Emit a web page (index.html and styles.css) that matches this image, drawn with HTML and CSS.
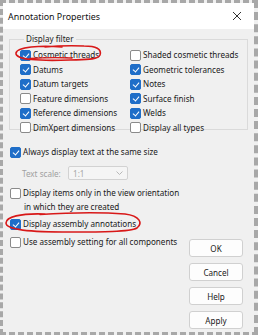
FILE: index.html
```html
<!DOCTYPE html>
<html>
<head>
<meta charset="utf-8">
<link rel="stylesheet" href="styles.css">
</head>
<body>
<div class="frame">
  <div class="dialog">
    <div class="titlebar">
      <span class="title">Annotation Properties</span>
      <svg class="close" width="10" height="10" viewBox="0 0 10 10"><path d="M1 1L9 9M9 1L1 9" stroke="#333" stroke-width="1"/></svg>
    </div>
    <div class="body">
      <fieldset class="group">
        <legend>Display filter</legend>
        <div class="grid">
          <label class="opt"><span class="cb on"></span>Cosmetic threads</label>
          <label class="opt"><span class="cb"></span>Shaded cosmetic threads</label>
          <label class="opt"><span class="cb on"></span>Datums</label>
          <label class="opt"><span class="cb on"></span>Geometric tolerances</label>
          <label class="opt"><span class="cb on"></span>Datum targets</label>
          <label class="opt"><span class="cb on"></span>Notes</label>
          <label class="opt"><span class="cb"></span>Feature dimensions</label>
          <label class="opt"><span class="cb on"></span>Surface finish</label>
          <label class="opt"><span class="cb on"></span>Reference dimensions</label>
          <label class="opt"><span class="cb on"></span>Welds</label>
          <label class="opt"><span class="cb"></span>DimXpert dimensions</label>
          <label class="opt"><span class="cb"></span>Display all types</label>
        </div>
      </fieldset>
      <div class="lower">
        <div class="opts">
          <label class="opt row1"><span class="cb on"></span>Always display text at the same size</label>
          <div class="scale">
            <span class="scale-label">Text scale:</span>
            <span class="select"><span>1:1</span><svg width="7" height="4" viewBox="0 0 7 4"><path d="M0.5 0.5L3.5 3.5L6.5 0.5" fill="none" stroke="#b8b8b8" stroke-width="1"/></svg></span>
          </div>
          <label class="opt row3"><span class="cb"></span>Display items only in the view orientation</label>
          <div class="cont">in which they are created</div>
          <label class="opt row4"><span class="cb on"></span>Display assembly annotations</label>
          <label class="opt row5"><span class="cb"></span>Use assembly setting for all components</label>
        </div>
        <div class="buttons">
          <button class="btn">OK</button>
          <button class="btn">Cancel</button>
          <button class="btn">Help</button>
          <button class="btn">Apply</button>
        </div>
      </div>
    </div>
  </div>
  <svg class="marks" width="258" height="335" viewBox="0 0 258 335">
    <path d="M62 47 C40 45, 17 47, 16 53 C15 60, 40 61, 70 60 C85 59.5, 98 60, 100 55 C102 49, 96 46, 84 46 C70 45.5, 55 46, 45 47" fill="none" stroke="#d81818" stroke-width="1.6" stroke-linecap="round"/>
    <path d="M30 58.5 C45 57.5, 60 57.5, 72 58" fill="none" stroke="#d81818" stroke-width="1.4" stroke-linecap="round"/>
    <path d="M45 214 C20 213, 6 217, 6 223 C6 230, 30 232, 70 232 C100 232, 130 232, 137 228 C143 223, 140 216, 125 214 C100 212, 70 212.5, 40 214.5" fill="none" stroke="#d81818" stroke-width="1.6" stroke-linecap="round"/>
  </svg>
</div>
</body>
</html>
```
FILE: styles.css
```css
* { box-sizing: border-box; }
html, body { margin: 0; padding: 0; }
body {
  width: 258px;
  height: 335px;
  overflow: hidden;
  background: #fff;
  font-family: "Noto Sans", "Open Sans", sans-serif;
  font-size: 8.1px;
  color: #1a1a1a;
}
.frame {
  position: relative;
  width: 258px;
  height: 335px;
  border-style: dashed;
  border-color: #a8a8a8;
  border-width: 3px 4px 3px 3px;
  background: #f0f0f0;
}
.dialog {
  width: 100%;
  height: 100%;
  display: flex;
  flex-direction: column;
}
.titlebar {
  height: 26px;
  background: #fff;
  display: flex;
  align-items: center;
  justify-content: space-between;
  padding: 0 12px 0 5px;
}
.title { font-size: 8.9px; color: #111; }
.close { display: block; }
.body {
  flex: 1;
  background: #f0f0f0;
  padding: 5px 6px 0 6px;
}
.group {
  margin: 0;
  border: 1px solid #dadada;
  padding: 4px 0 0 10px;
  height: 96px;
}
.group legend {
  padding: 0 2px;
  margin-left: 4px;
  color: #222;
  line-height: 10px;
}
.grid {
  display: grid;
  grid-template-columns: 110px 1fr;
  grid-auto-rows: 14.5px;
}
.opt {
  display: flex;
  align-items: center;
  white-space: nowrap;
  line-height: 12px;
}
.cb {
  width: 11px;
  height: 11px;
  border: 1px solid #8a8a8a;
  border-radius: 2px;
  background: #fff;
  margin-right: 2px;
  flex: none;
  position: relative;
}
.cb.on {
  background: #1f6ec8;
  border-color: #1f6ec8;
}
.cb.on::after {
  content: "";
  position: absolute;
  left: 3px;
  top: 1px;
  width: 3px;
  height: 5px;
  border: solid #fff;
  border-width: 0 1.3px 1.3px 0;
  transform: rotate(40deg);
}
.lower {
  display: flex;
  justify-content: space-between;
  padding: 0 5px 0 1px;
}
.opts {
  display: flex;
  flex-direction: column;
}
.row1 { margin-top: 16px; }
.scale {
  display: flex;
  align-items: center;
  margin-top: 8px;
  padding-left: 12px;
  color: #a0a0a0;
}
.scale-label { width: 46px; }
.select {
  width: 60px;
  height: 14px;
  border: 1px solid #d2d2d2;
  border-radius: 2px;
  background: #f5f5f5;
  display: flex;
  align-items: center;
  justify-content: space-between;
  padding: 0 4px 0 4px;
  color: #a8a8a8;
}
.row3 { margin-top: 7px; }
.cont { padding-left: 14px; margin-top: 2px; line-height: 12px; }
.row4 { margin-top: 5px; }
.row5 { margin-top: 6px; }
.buttons {
  display: flex;
  flex-direction: column;
  gap: 6px;
  margin-top: 109px;
}
.btn {
  width: 54px;
  height: 18px;
  background: #fdfdfd;
  border: 1px solid #d0d0d0;
  border-radius: 3px;
  font-family: inherit;
  font-size: 8.1px;
  color: #1a1a1a;
  padding: 0;
}
.marks {
  position: absolute;
  left: -3px;
  top: -3px;
  pointer-events: none;
}
```
